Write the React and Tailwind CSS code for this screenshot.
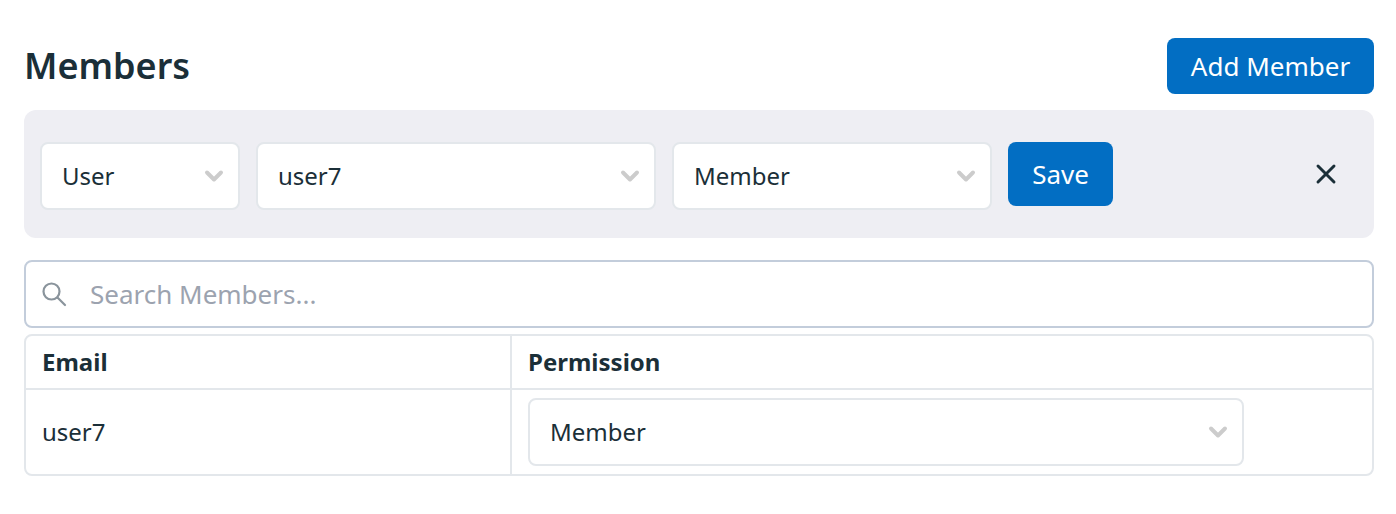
import { ChevronDown, X } from 'lucide-react'

function Select({ value, className }) {
  return (
    <div className={`flex items-center justify-between h-[68px] bg-white border-2 border-[#e3e7eb] rounded-lg pl-[20px] pr-[10px] text-[24px] text-[#1b2f38] ${className}`}>
      <span>{value}</span>
      <ChevronDown size={28} strokeWidth={3.4} className="text-[#cccccc]" />
    </div>
  )
}

export default function App() {
  return (
    <div className="h-[514px] bg-white pl-[24px] pr-[22px] pt-[38px] font-['Noto_Sans',sans-serif] text-[#1b2f38]">
      <div className="flex items-center justify-between h-[56px] mb-[16px]">
        <h1 className="text-[36px] font-semibold">Members</h1>
        <button className="h-[56px] w-[207px] bg-[#026ec3] text-white text-[26px] rounded-lg">Add Member</button>
      </div>

      <div className="flex items-start gap-[16px] h-[128px] bg-[#eeeef3] rounded-xl px-[16px] pt-[32px] mb-[22px]">
        <Select value="User" className="w-[200px]" />
        <Select value="user7" className="w-[400px]" />
        <Select value="Member" className="w-[320px]" />
        <button className="h-[64px] w-[105px] bg-[#026ec3] text-white text-[26px] rounded-lg">Save</button>
        <div className="flex-1 flex justify-end pt-[16px] pr-[16px]">
          <X size={32} strokeWidth={2.2} className="text-[#1b2f38]" />
        </div>
      </div>

      <div className="flex items-center h-[68px] border-2 border-[#c3cddb] rounded-lg pl-[15px] mb-[6px]">
        <svg width="26" height="26" viewBox="0 0 26 26" fill="none" stroke="#8a949c" strokeWidth="2.2" strokeLinecap="round">
          <circle cx="10.5" cy="10.5" r="8" />
          <path d="M16.5 16.5L24 24" />
        </svg>
        <span className="ml-[23px] pt-[1px] text-[26px] text-[#9ca3af]">Search Members...</span>
      </div>

      <div className="border-2 border-[#e3e7eb] rounded-lg grid grid-cols-[486px_1fr]">
        <div className="h-[54px] flex items-center pl-[16px] text-[24px] font-bold border-b-2 border-r-2 border-[#e3e7eb]">Email</div>
        <div className="h-[54px] flex items-center pl-[16px] text-[24px] font-bold border-b-2 border-[#e3e7eb]">Permission</div>
        <div className="h-[84px] flex items-center pl-[16px] text-[24px] border-r-2 border-[#e3e7eb]">user7</div>
        <div className="h-[84px] flex items-center pl-[16px]">
          <Select value="Member" className="w-[716px]" />
        </div>
      </div>
    </div>
  )
}
